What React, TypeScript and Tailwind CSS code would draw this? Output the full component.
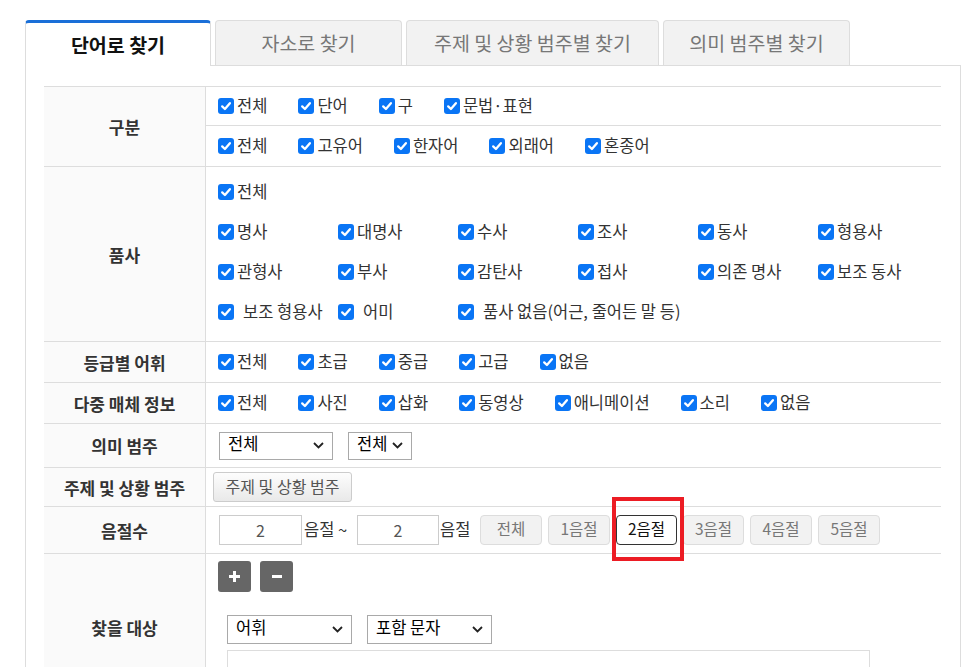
import React from "react";

function Check({ label, space }: { label: string; space?: boolean }) {
  return (
    <span className="inline-flex items-center h-[40px] whitespace-nowrap">
      <span className="w-4 h-4 rounded-[3px] bg-[#0a75f5] flex items-center justify-center shrink-0">
        <svg width="12" height="12" viewBox="0 0 12 12">
          <path d="M2.2 6.4 L4.9 9 L9.9 3.2" stroke="white" strokeWidth="2.3" fill="none" strokeLinecap="round" strokeLinejoin="round" />
        </svg>
      </span>
      <span className={space ? "ml-[9px] -mt-[2px]" : "ml-[3px] -mt-[2px]"}>{label}</span>
    </span>
  );
}

function CheckRow({ items, className }: { items: string[]; className?: string }) {
  return (
    <div className={"flex items-center pl-[12px] " + (className ?? "")}>
      {items.map((t) => (
        <span key={t} className="mr-[31px]">
          <Check label={t} />
        </span>
      ))}
    </div>
  );
}

function Chevron() {
  return (
    <svg width="11" height="7" viewBox="0 0 11 7">
      <path d="M1 1 L5.5 5.5 L10 1" stroke="#222" strokeWidth="1.8" fill="none" />
    </svg>
  );
}

function Select({ label, w, h = 28 }: { label: string; w: number; h?: number }) {
  return (
    <div
      className="border border-[#a9a9a9] bg-white flex items-center justify-between pl-[8px] pr-[8px] text-[16.5px] text-black leading-none"
      style={{ width: w, height: h }}
    >
      <span className="-mt-[5px]">{label}</span>
      <Chevron />
    </div>
  );
}

function Label({ children }: { children: React.ReactNode }) {
  return (
    <div className="w-[162px] shrink-0 bg-[#fafafa] border-r border-[#ddd] flex items-center justify-center font-bold text-[17px] text-[#333]">
      {children}
    </div>
  );
}

export default function App() {
  const pos1 = ["명사", "대명사", "수사", "조사", "동사", "형용사"];
  const pos2 = ["관형사", "부사", "감탄사", "접사", "의존 명사", "보조 동사"];
  const syl = [
    { t: "전체", w: 62 },
    { t: "1음절", w: 62 },
    { t: "2음절", w: 61, active: true },
    { t: "3음절", w: 61 },
    { t: "4음절", w: 62 },
    { t: "5음절", w: 62 },
  ];
  return (
    <div className="w-[962px] h-[667px] overflow-hidden bg-white pt-[20px] pl-[25px] font-['Noto_Sans_CJK_KR',sans-serif] text-[16.5px] text-[#333] leading-none">
      {/* tabs */}
      <div className="flex items-end gap-[4px] border-b border-[#ddd] w-[936px] h-[46px]">
        <div className="relative -mb-px w-[186px] h-[46px] bg-white border-t-[3px] border-t-[#1a6fd8] border-x border-x-[#ddd] rounded-t-[4px] flex items-center justify-center text-[19.5px] font-bold text-[#111]">
          단어로 찾기
        </div>
        <div className="w-[187px] h-[45px] bg-[#f2f2f2] border-t border-x border-[#ddd] rounded-t-[4px] flex items-center justify-center text-[19.5px] text-[#777]">
          자소로 찾기
        </div>
        <div className="w-[253px] h-[45px] bg-[#f2f2f2] border-t border-x border-[#ddd] rounded-t-[4px] flex items-center justify-center text-[19.5px] text-[#777]">
          주제 및 상황 범주별 찾기
        </div>
        <div className="w-[187px] h-[45px] bg-[#f2f2f2] border-t border-x border-[#ddd] rounded-t-[4px] flex items-center justify-center text-[19.5px] text-[#777]">
          의미 범주별 찾기
        </div>
      </div>

      {/* panel */}
      <div className="w-[936px] h-[700px] border-x border-[#ddd] pl-[18px] pt-[20px]">
        <div className="w-[897px] border-t border-[#ddd]">
          {/* 구분 */}
          <div className="flex border-b border-[#ddd]">
            <Label>구분</Label>
            <div className="flex-1">
              <CheckRow items={["전체", "단어", "구", "문법·표현"]} className="h-[39px] border-b border-[#ddd]" />
              <CheckRow items={["전체", "고유어", "한자어", "외래어", "혼종어"]} className="h-[40px]" />
            </div>
          </div>

          {/* 품사 */}
          <div className="flex border-b border-[#ddd] h-[175px]">
            <Label>품사</Label>
            <div className="flex-1 pl-[12px] pt-[5px]">
              <div className="h-[40px] flex items-center">
                <Check label="전체" />
              </div>
              <div className="grid grid-cols-[120px_120px_120px_120px_120px_120px] h-[40px] items-center">
                {pos1.map((t) => (
                  <Check key={t} label={t} />
                ))}
              </div>
              <div className="grid grid-cols-[120px_120px_120px_120px_120px_120px] h-[40px] items-center">
                {pos2.map((t) => (
                  <Check key={t} label={t} />
                ))}
              </div>
              <div className="grid grid-cols-[120px_120px_360px] h-[40px] items-center">
                <Check label="보조 형용사" space />
                <Check label="어미" space />
                <Check label="품사 없음(어근, 줄어든 말 등)" space />
              </div>
            </div>
          </div>

          {/* 등급별 어휘 */}
          <div className="flex border-b border-[#ddd] h-[41px]">
            <Label>등급별 어휘</Label>
            <CheckRow items={["전체", "초급", "중급", "고급", "없음"]} className="flex-1" />
          </div>

          {/* 다중 매체 정보 */}
          <div className="flex border-b border-[#ddd] h-[41px]">
            <Label>다중 매체 정보</Label>
            <CheckRow items={["전체", "사진", "삽화", "동영상", "애니메이션", "소리", "없음"]} className="flex-1" />
          </div>

          {/* 의미 범주 */}
          <div className="flex border-b border-[#ddd] h-[44px]">
            <Label>의미 범주</Label>
            <div className="flex-1 flex items-center pl-[13px] gap-[15px]">
              <Select label="전체" w={114} />
              <Select label="전체" w={64} />
            </div>
          </div>

          {/* 주제 및 상황 범주 */}
          <div className="flex border-b border-[#ddd] h-[39px]">
            <Label>주제 및 상황 범주</Label>
            <div className="flex-1 flex items-center pl-[7px]">
              <div className="w-[139px] h-[30px] rounded-[3px] border border-[#ccc] bg-gradient-to-b from-[#fdfdfd] to-[#e9e9e9] flex items-center justify-center text-[16px] text-[#555]">
                <span className="-mt-[2px]">주제 및 상황 범주</span>
              </div>
            </div>
          </div>

          {/* 음절수 */}
          <div className="flex border-b border-[#ddd] h-[47px]">
            <Label>음절수</Label>
            <div className="flex-1 flex items-center pl-[13px]">
              <div className="w-[83px] h-[30px] border border-[#ccc] flex items-center justify-center text-[16px] text-[#555]">2</div>
              <span className="w-[55px] pl-[2px] whitespace-nowrap -mt-[2px]">음절 ~</span>
              <div className="w-[82px] h-[30px] border border-[#ccc] flex items-center justify-center text-[16px] text-[#555]">2</div>
              <span className="w-[41px] pl-[1px] whitespace-nowrap -mt-[2px]">음절</span>
              <div className="flex gap-[6px]">
                {syl.map((b) => (
                  <div key={b.t} className="relative" style={{ width: b.w }}>
                    <div
                      className={
                        "h-[30px] rounded-[4px] border flex items-center justify-center text-[15.5px] " +
                        (b.active ? "bg-white border-[#333] text-[#111]" : "bg-[#f2f2f2] border-[#ddd] text-[#777]")
                      }
                    >
                      <span className="-mt-[2px]">{b.t}</span>
                    </div>
                    {b.active && (
                      <div className="absolute left-[-4px] top-[-18px] w-[72px] h-[64px] border-4 border-[#ec1c24] z-10" />
                    )}
                  </div>
                ))}
              </div>
            </div>
          </div>

          {/* 찾을 대상 */}
          <div className="flex border-b border-[#ddd] h-[147px]">
            <Label>찾을 대상</Label>
            <div className="flex-1 pl-[12px] pt-[7px]">
              <div className="flex gap-[9px]">
                <div className="w-[33px] h-[31px] rounded-[3px] bg-[#666] flex items-center justify-center">
                  <svg width="11" height="11" viewBox="0 0 11 11">
                    <rect x="4" y="0" width="3" height="11" fill="white" />
                    <rect x="0" y="4" width="11" height="3" fill="white" />
                  </svg>
                </div>
                <div className="w-[33px] h-[31px] rounded-[3px] bg-[#666] flex items-center justify-center">
                  <svg width="10" height="3" viewBox="0 0 10 3">
                    <rect x="0" y="0" width="10" height="3" fill="white" />
                  </svg>
                </div>
              </div>
              <div className="pl-[9px] mt-[23px]">
                <div className="flex gap-[15px]">
                  <Select label="어휘" w={125} h={29} />
                  <Select label="포함 문자" w={125} h={29} />
                </div>
                <div className="mt-[6px] w-[643px] h-[40px] border border-[#ddd]" />
              </div>
            </div>
          </div>
        </div>
      </div>
    </div>
  );
}
